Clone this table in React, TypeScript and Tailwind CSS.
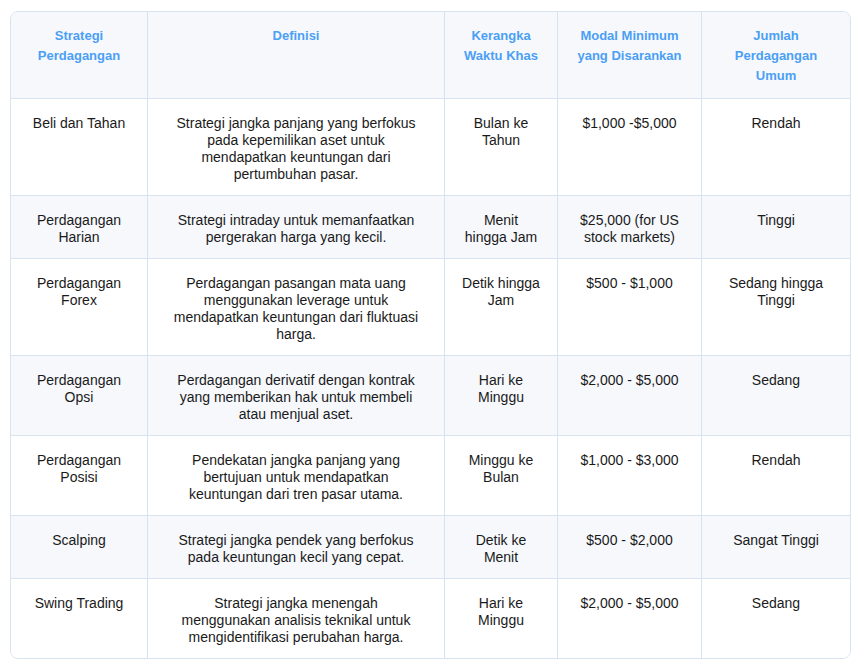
const headers: string[][] = [
  ["Strategi", "Perdagangan"],
  ["Definisi"],
  ["Kerangka", "Waktu Khas"],
  ["Modal Minimum", "yang Disarankan"],
  ["Jumlah", "Perdagangan", "Umum"],
];

// each cell is a list of lines, wrapped as in the source
const rows: string[][][] = [
  [
    ["Beli dan Tahan"],
    ["Strategi jangka panjang yang berfokus", "pada kepemilikan aset untuk", "mendapatkan keuntungan dari", "pertumbuhan pasar."],
    ["Bulan ke", "Tahun"],
    ["$1,000 -$5,000"],
    ["Rendah"],
  ],
  [
    ["Perdagangan", "Harian"],
    ["Strategi intraday untuk memanfaatkan", "pergerakan harga yang kecil."],
    ["Menit", "hingga Jam"],
    ["$25,000 (for US", "stock markets)"],
    ["Tinggi"],
  ],
  [
    ["Perdagangan", "Forex"],
    ["Perdagangan pasangan mata uang", "menggunakan leverage untuk", "mendapatkan keuntungan dari fluktuasi", "harga."],
    ["Detik hingga", "Jam"],
    ["$500 - $1,000"],
    ["Sedang hingga", "Tinggi"],
  ],
  [
    ["Perdagangan", "Opsi"],
    ["Perdagangan derivatif dengan kontrak", "yang memberikan hak untuk membeli", "atau menjual aset."],
    ["Hari ke", "Minggu"],
    ["$2,000 - $5,000"],
    ["Sedang"],
  ],
  [
    ["Perdagangan", "Posisi"],
    ["Pendekatan jangka panjang yang", "bertujuan untuk mendapatkan", "keuntungan dari tren pasar utama."],
    ["Minggu ke", "Bulan"],
    ["$1,000 - $3,000"],
    ["Rendah"],
  ],
  [
    ["Scalping"],
    ["Strategi jangka pendek yang berfokus", "pada keuntungan kecil yang cepat."],
    ["Detik ke", "Menit"],
    ["$500 - $2,000"],
    ["Sangat Tinggi"],
  ],
  [
    ["Swing Trading"],
    ["Strategi jangka menengah", "menggunakan analisis teknikal untuk", "mengidentifikasi perubahan harga."],
    ["Hari ke", "Minggu"],
    ["$2,000 - $5,000"],
    ["Sedang"],
  ],
];

const Lines = ({ lines }: { lines: string[] }) => (
  <>
    {lines.map((l, i) => (
      <div key={i} className="whitespace-nowrap">
        {l}
      </div>
    ))}
  </>
);

export default function App() {
  return (
    <div className="min-h-screen bg-white pt-[11px] pl-[10px] font-['Liberation_Sans',Arial,sans-serif]">
      <div className="w-[841px] overflow-hidden rounded-lg border border-[#d8e3f0]">
        <div className="grid grid-cols-[137px_297px_113px_144px_148px]">
          {headers.map((h, i) => (
            <div
              key={i}
              className={`border-b border-[#d8e3f0] bg-[#f6f8fc] px-2 pt-[14px] pb-[12px] text-center text-[13px] font-bold leading-5 text-[#4b9ff4] ${
                i < 4 ? "border-r" : ""
              }`}
            >
              <Lines lines={h} />
            </div>
          ))}
          {rows.map((row, r) =>
            row.map((cell, c) => (
              <div
                key={`${r}-${c}`}
                className={`px-2 pt-4 pb-3 text-center text-[14px] leading-[17px] text-[#1a1a1a] ${
                  r % 2 === 1 ? "bg-[#f6f8fc]" : "bg-white"
                } ${c < 4 ? "border-r border-[#d8e3f0]" : ""} ${
                  r < rows.length - 1 ? "border-b border-[#d8e3f0]" : ""
                }`}
              >
                <Lines lines={cell} />
              </div>
            ))
          )}
        </div>
      </div>
    </div>
  );
}
